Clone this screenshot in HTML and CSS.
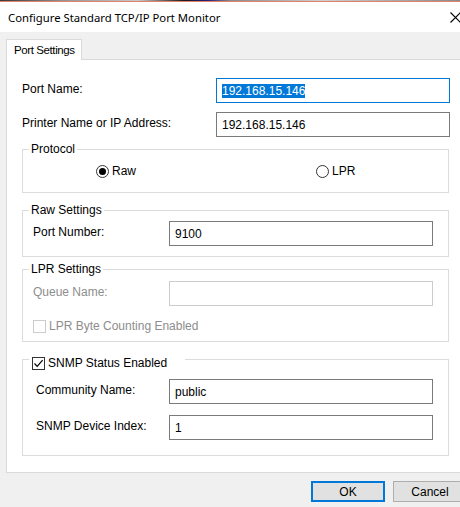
FILE: index.html
```html
<!DOCTYPE html>
<html lang="en">
<head>
  <meta charset="UTF-8">
  <meta name="viewport" content="width=device-width, initial-scale=1.0">
  <title>Configure Standard TCP/IP Port Monitor</title>
  <link rel="stylesheet" href="styles.css">
</head>
<body>
  <div class="screen-edge"></div>
  <div class="window">
    <div class="titlebar">
      <span class="title">Configure Standard TCP/IP Port Monitor</span>
      <svg class="close" width="11" height="11" viewBox="0 0 11 11">
        <path d="M0.5 0.5 L10.5 10.5 M10.5 0.5 L0.5 10.5" stroke="#000" stroke-width="1.1" fill="none"/>
      </svg>
    </div>

    <div class="client">
      <div class="tab">Port Settings</div>

      <div class="panel">
        <!-- port name / address -->
        <div class="row">
          <span class="lbl wide">Port Name:</span>
          <div class="field long focused"><span class="selection">192.168.15.146</span></div>
        </div>
        <div class="row">
          <span class="lbl wide">Printer Name or IP Address:</span>
          <div class="field long">192.168.15.146</div>
        </div>

        <!-- protocol -->
        <div class="group protocol">
          <div class="legend">Protocol</div>
          <div class="radios">
            <span class="radio"><span class="dot checked"></span>Raw</span>
            <span class="radio"><span class="dot"></span>LPR</span>
          </div>
        </div>

        <div class="group raw">
          <div class="legend">Raw Settings</div>
          <div class="row">
            <span class="lbl">Port Number:</span>
            <div class="field">9100</div>
          </div>
        </div>

        <div class="group lpr">
          <div class="legend">LPR Settings</div>
          <div class="row">
            <span class="lbl disabled">Queue Name:</span>
            <div class="field disabled"></div>
          </div>
          <div class="check disabled"><span class="box"></span>LPR Byte Counting Enabled</div>
        </div>

        <div class="group snmp">
          <div class="legend check"><span class="box checked">
            <svg width="11" height="11" viewBox="0 0 11 11"><path d="M1.5 5.5 L4.2 8.3 L9.6 2.2" stroke="#000" stroke-width="1.2" fill="none"/></svg>
          </span>SNMP Status Enabled</div>
          <div class="row">
            <span class="lbl">Community Name:</span>
            <div class="field">public</div>
          </div>
          <div class="row">
            <span class="lbl">SNMP Device Index:</span>
            <div class="field">1</div>
          </div>
        </div>
      </div>

      <div class="buttons">
        <button class="btn default">OK</button>
        <button class="btn">Cancel</button>
      </div>
    </div>
  </div>
</body>
</html>
```

FILE: styles.css
```css
* {
  box-sizing: border-box;
}

html, body {
  margin: 0;
}

body {
  width: 460px;
  height: 507px;
  overflow: hidden;
  background-color: #f0f0f0;
  font-family: "Liberation Sans", Arial, sans-serif;
  font-size: 12px;
  color: #000;
}

.screen-edge {
  height: 1px;
  background: linear-gradient(90deg, #3a3a3a 0, #9a9a9a 15%, #c8c8c8 30%, #1a1a1a 40%, #20207a 45%, #8a8a8a 50%, #cfcfcf 70%, #8a8a8a 100%);
}

.window {
  width: 474px;
  border-top: 1px solid #e2826b;
}

.titlebar {
  height: 30px;
  background-color: #fff;
  display: flex;
  align-items: center;
  padding-left: 8px;
}

.title {
  font-family: "Noto Sans", sans-serif;
  font-size: 11.3px;
}

.close {
  margin-left: auto;
  margin-right: 13px;
}

.client {
  padding: 7px 0 0 6px;
}

.tab {
  position: relative;
  z-index: 1;
  width: 76px;
  height: 21px;
  margin-bottom: -1px;
  padding-left: 7px;
  white-space: nowrap;
  font-size: 11.5px;
  letter-spacing: -0.4px;
  line-height: 20px;
  background-color: #fff;
  border: 1px solid #d9d9d9;
  border-bottom: none;
}

.panel {
  height: 414px;
  padding: 18px 0 0 15px;
  background-color: #fff;
  border: 1px solid #d9d9d9;
}

.row {
  display: flex;
  align-items: center;
}

.row + .row {
  margin-top: 9px;
}

.lbl {
  width: 136px;
  margin-bottom: 3px;
}

.lbl.wide {
  width: 194px;
}

.lbl.disabled,
.check.disabled {
  color: #8d8d8d;
}

.field {
  width: 264px;
  height: 25px;
  padding-left: 5px;
  display: flex;
  align-items: center;
  border: 1px solid #7a7a7a;
  background-color: #fff;
}

.field.long {
  width: 234px;
}

.field.focused {
  border-color: #0078d7;
}

.field.disabled {
  border-color: #cccccc;
}

.selection {
  background-color: #0078d7;
  color: #fff;
  line-height: 14px;
}

/* group boxes: the legend sits on the top border */
.group {
  width: 427px;
  border: 1px solid #dcdcdc;
  padding-left: 10px;
}

.legend {
  display: table;
  margin: -8px 0 0 -4px;
  padding: 0 2px;
  line-height: 15px;
  background-color: #fff;
}

.protocol {
  margin-top: 12px;
  height: 44px;
  padding-left: 0;
}

.protocol .legend {
  margin-left: 6px;
}

.radios {
  display: grid;
  grid-template-columns: 220px auto;
  margin-top: 6px;
  padding-left: 73px;
}

.radio {
  display: flex;
  align-items: center;
  line-height: 16px;
}

.dot {
  width: 13px;
  height: 13px;
  margin-right: 3px;
  border: 1px solid #333;
  border-radius: 50%;
  display: flex;
  align-items: center;
  justify-content: center;
}

.dot.checked::after {
  content: "";
  width: 7px;
  height: 7px;
  border-radius: 50%;
  background-color: #000;
}

.raw {
  margin-top: 17px;
  height: 47px;
}

.raw .row {
  margin-top: 3px;
}

.lpr {
  margin-top: 12px;
  height: 73px;
}

.lpr .row {
  margin-top: 4px;
}

.check {
  display: flex;
  align-items: center;
  line-height: 16px;
}

.lpr .check {
  margin-top: 12px;
}

.box {
  width: 13px;
  height: 13px;
  margin-right: 3px;
  border: 1px solid #cccccc;
  display: flex;
  align-items: center;
  justify-content: center;
}

.box.checked {
  border-color: #333;
}

.snmp {
  margin-top: 17px;
  height: 97px;
  padding-left: 13px;
}

.snmp .legend {
  display: flex;
  margin: -5px 0 0 -7px;
  padding: 0 18px 0 3px;
  width: max-content;
}

.snmp .lbl {
  width: 133px;
}

.snmp .legend + .row {
  margin-top: 8px;
}

.snmp .row + .row {
  margin-top: 11px;
}

/* dialog buttons */
.buttons {
  display: flex;
  gap: 8px;
  padding: 8px 0 0 305px;
}

.btn {
  width: 74px;
  height: 21px;
  padding: 0;
  font-family: inherit;
  font-size: 12px;
  color: #000;
  background-color: #e1e1e1;
  border: 1px solid #adadad;
}

.btn.default {
  border: 2px solid #0078d7;
}
```
